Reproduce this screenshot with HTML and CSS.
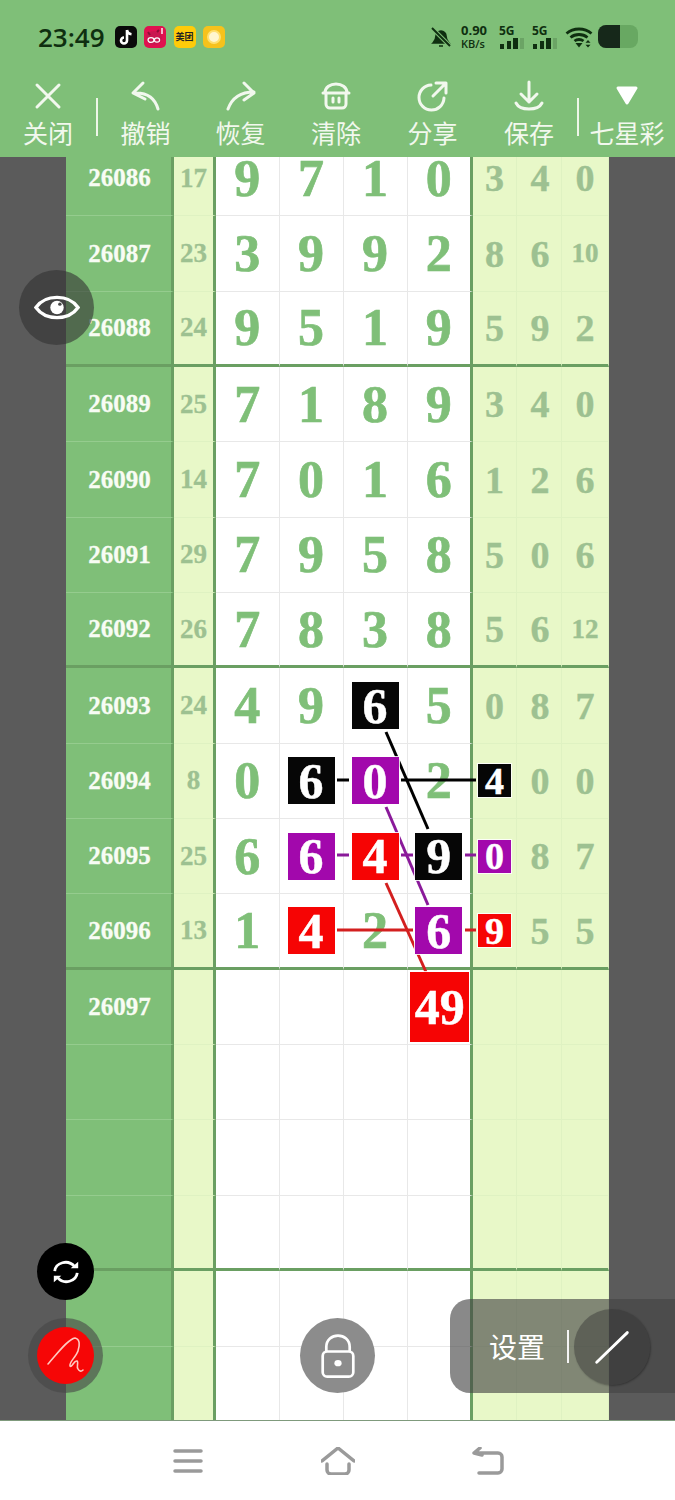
FILE: index.html
```html
<!DOCTYPE html>
<html lang="zh-CN">
<head>
    <meta charset="UTF-8">
    <meta name="viewport" content="width=device-width, initial-scale=1.0">
    <title>七星彩</title>
    <link rel="stylesheet" href="styles.css">
</head>
<body>
    <div class="page">
        <!-- status bar -->
        <div class="status">
            <span class="clock">23:49</span>
            <div class="apps">
                <span class="app app-tiktok">
                    <svg viewBox="0 0 22 22"><path d="M12 4v10.5a3 3 0 1 1-3-3M12 4c.4 2.6 2 4 4.5 4.3" fill="none" stroke="#fff" stroke-width="2.6"/></svg>
                </span>
                <span class="app app-pig">
                    <svg viewBox="0 0 22 22"><ellipse cx="10" cy="12" rx="8" ry="7" fill="#c9174f"/><path d="M4 6l2 3M13 6l2-2" stroke="#8e0f38" stroke-width="2"/><ellipse cx="7" cy="14" rx="3" ry="2.4" fill="none" stroke="#fff" stroke-width="1.2"/><ellipse cx="13" cy="14" rx="2.6" ry="2.2" fill="none" stroke="#fff" stroke-width="1.2"/><path d="M18 2v6" stroke="#fff" stroke-width="1.4"/></svg>
                </span>
                <span class="app app-meituan">美团</span>
                <span class="app app-sun"><i></i></span>
            </div>
            <div class="status-right">
                <svg class="bell" viewBox="0 0 22 22"><path d="M3 17c2-2 3-4 3-7a5 5 0 0 1 10 0c0 3 1 5 3 7zM9 20h4" fill="#0f2f10" stroke="#0f2f10" stroke-width="1.6"/><path d="M2 2l18 18" stroke="#7fbf78" stroke-width="4"/><path d="M2 2l18 18" stroke="#0f2f10" stroke-width="2"/></svg>
                <div class="speed"><span>0.90</span><span class="unit">KB/s</span></div>
                <div class="signal"><span>5G</span><svg viewBox="0 0 26 11"><path d="M1 6h4v5H1zM8 3h4v8H8zM14 0h5v11h-5z" fill="#0f2f10"/><path d="M21 0h4v11h-4z" fill="#0f2f10" opacity=".18"/></svg></div>
                <div class="signal"><span>5G</span><svg viewBox="0 0 26 11"><path d="M1 6h4v5H1zM8 3h4v8H8zM14 0h5v11h-5z" fill="#0f2f10"/><path d="M21 0h4v11h-4z" fill="#0f2f10" opacity=".18"/></svg></div>
                <svg class="wifi" viewBox="0 0 28 22"><path d="M1.5 7.5c7-6 18-6 25 0M5.5 11.5c4.800-4 12.200-4 17 0M9.500 15c2.500-2 6.500-2 9 0" fill="none" stroke="#0f2f10" stroke-width="2.8"/><path d="M10.5 17h7l-3.500 4.500z" fill="#0f2f10"/><path d="M23 14l2.500 2.800h-5zM23 21.500l2.500-2.800h-5z" fill="#0f2f10"/></svg>
                <div class="battery"><i></i></div>
            </div>
        </div>

        <!-- toolbar -->
        <div class="toolbar">
            <div class="tool">
                <svg viewBox="0 0 32 32"><path d="M5 5l22 22M27 5L5 27"/></svg>
                <span>关闭</span>
            </div>
            <i class="tool-sep"></i>
            <div class="tool tool-narrow">
                <svg viewBox="0 0 32 32"><path d="M13 3L3 13l12 6M3 13c14-1 22 5 25 16"/></svg>
                <span>撤销</span>
            </div>
            <div class="tool tool-narrow">
                <svg viewBox="0 0 32 32"><path d="M19 3l10 10-10 7M29 12C15 12 7 18 3 29"/></svg>
                <span>恢复</span>
            </div>
            <div class="tool">
                <svg viewBox="0 0 32 32"><path d="M5 13c0-12 22-12 22 0M3 13h26M6 13v11a4 4 0 0 0 4 4h12a4 4 0 0 0 4-4V13M13 18v4M19 18v4"/></svg>
                <span>清除</span>
            </div>
            <div class="tool tool-wide">
                <svg viewBox="0 0 32 32"><path d="M14 5a12.5 12.5 0 1 0 13 13M16 16L28 4M19 3h10v10"/></svg>
                <span>分享</span>
            </div>
            <div class="tool">
                <svg viewBox="0 0 32 32"><path d="M16 2v20M8 14l8 8 8-8M3 23c4 8 22 8 26 0"/></svg>
                <span>保存</span>
            </div>
            <i class="tool-sep"></i>
            <div class="tool">
                <svg viewBox="0 0 32 32"><path class="solid" d="M7 8h18L16 23z"/></svg>
                <span>七星彩</span>
            </div>
        </div>

        <!-- chart -->
        <div class="board">
            <div class="grid">
                <div class="row"><div>26086</div><div>17</div><div>9</div><div>7</div><div>1</div><div>0</div><div>3</div><div>4</div><div>0</div></div>
                <div class="row"><div>26087</div><div>23</div><div>3</div><div>9</div><div>9</div><div>2</div><div>8</div><div>6</div><div class="two">10</div></div>
                <div class="row row-end"><div>26088</div><div>24</div><div>9</div><div>5</div><div>1</div><div>9</div><div>5</div><div>9</div><div>2</div></div>
                <div class="row"><div>26089</div><div>25</div><div>7</div><div>1</div><div>8</div><div>9</div><div>3</div><div>4</div><div>0</div></div>
                <div class="row"><div>26090</div><div>14</div><div>7</div><div>0</div><div>1</div><div>6</div><div>1</div><div>2</div><div>6</div></div>
                <div class="row"><div>26091</div><div>29</div><div>7</div><div>9</div><div>5</div><div>8</div><div>5</div><div>0</div><div>6</div></div>
                <div class="row row-end"><div>26092</div><div>26</div><div>7</div><div>8</div><div>3</div><div>8</div><div>5</div><div>6</div><div class="two">12</div></div>
                <div class="row"><div>26093</div><div>24</div><div>4</div><div>9</div><div><b class="box black">6</b></div><div>5</div><div>0</div><div>8</div><div>7</div></div>
                <div class="row"><div>26094</div><div>8</div><div>0</div><div><b class="box black">6</b></div><div><b class="box purple">0</b></div><div>2</div><div><b class="box small black">4</b></div><div>0</div><div>0</div></div>
                <div class="row"><div>26095</div><div>25</div><div>6</div><div><b class="box purple">6</b></div><div><b class="box red">4</b></div><div><b class="box black">9</b></div><div><b class="box small purple">0</b></div><div>8</div><div>7</div></div>
                <div class="row row-end"><div>26096</div><div>13</div><div>1</div><div><b class="box red">4</b></div><div>2</div><div><b class="box purple">6</b></div><div><b class="box small red">9</b></div><div>5</div><div>5</div></div>
                <div class="row"><div>26097</div><div></div><div></div><div></div><div></div><div><b class="box big red">49</b></div><div></div><div></div><div></div></div>
                <div class="row"><div></div><div></div><div></div><div></div><div></div><div></div><div></div><div></div><div></div></div>
                <div class="row"><div></div><div></div><div></div><div></div><div></div><div></div><div></div><div></div><div></div></div>
                <div class="row row-end"><div></div><div></div><div></div><div></div><div></div><div></div><div></div><div></div><div></div></div>
                <div class="row"><div></div><div></div><div></div><div></div><div></div><div></div><div></div><div></div><div></div></div>
                <div class="row"><div></div><div></div><div></div><div></div><div></div><div></div><div></div><div></div><div></div></div>
            </div>
        </div>

        <!-- bottom nav -->
        <div class="nav">
            <svg viewBox="0 0 34 28"><path d="M4 4h26M4 14h26M4 24h26"/></svg>
            <svg viewBox="0 0 34 28"><path d="M1 14L17 1l16 13M6 17v6a4 4 0 0 0 4 4h14a4 4 0 0 0 4-4v-6"/></svg>
            <svg viewBox="0 0 34 28"><path d="M9 1L3 6l8 2M3 6h24a4 4 0 0 1 4 4v12a4 4 0 0 1-4 4H8"/></svg>
        </div>

        <!-- connecting lines between the picked numbers -->
        <svg class="links" viewBox="0 0 675 1500">
            <g stroke="#000">
                <path d="M386 732L428 829"/>
                <path d="M337 780h12M401 780h75"/>
            </g>
            <g stroke="#8a1a9a">
                <path d="M386 807L428 905"/>
                <path d="M337 855h12M401 855h12M465 855h11"/>
            </g>
            <g stroke="#d31f1f">
                <path d="M386 883L426 972"/>
                <path d="M337 930h76M465 930h11"/>
            </g>
        </svg>

        <!-- floating controls -->
        <div class="float eye">
            <svg viewBox="0 0 48 32"><path d="M2 16C12 2 36 2 46 16C36 30 12 30 2 16z" fill="none" stroke="#fff" stroke-width="3.5"/><circle cx="24" cy="16" r="7" fill="#fff"/><circle cx="27" cy="12.5" r="1.8" fill="#474747"/></svg>
        </div>
        <div class="float sync">
            <svg viewBox="0 0 32 32"><path d="M4 15C5 6 18 2 25 10M28 17c-1 9-14 13-21 5" fill="none" stroke="#fff" stroke-width="3"/><path d="M21 12h8V5zM11 20H3v7z" fill="#fff"/></svg>
        </div>
        <div class="float pen">
            <div class="pen-dot">
                <svg viewBox="0 0 57 57"><path d="M11 37C20 27 31 12 38 11c5 1 5 7 3 13-2 6-9 11-8 15 2 2 4-6 7-5 2 1-1 6 1 8 1 2 3 3 5 1" fill="none" stroke="#ffc9c0" stroke-width="1.6" stroke-linecap="round"/></svg>
            </div>
        </div>
        <div class="float lock">
            <svg viewBox="0 0 40 50"><rect x="3" y="20" width="34" height="28" rx="5" fill="none" stroke="#fff" stroke-width="3"/><path d="M7 20v-5c0-17 26-17 26 0v5" fill="none" stroke="#fff" stroke-width="3"/><ellipse cx="20" cy="33" rx="4" ry="3.5" fill="#fff"/></svg>
        </div>
        <div class="float panel">
            <span class="panel-label">设置</span>
            <i class="panel-sep"></i>
            <div class="panel-dot">
                <svg viewBox="0 0 40 40"><path d="M3 37L37 4" stroke="#fff" stroke-width="3.2" stroke-linecap="round"/></svg>
            </div>
        </div>
    </div>
</body>
</html>
```

FILE: styles.css
```css
* {
    box-sizing: border-box;
}

body {
    margin: 0;
    font-family: "Noto Sans CJK SC", "Noto Sans", sans-serif;
}

.page {
    position: relative;
    width: 675px;
    height: 1500px;
    overflow: hidden;
    display: flex;
    flex-direction: column;
    background-color: #7fbf78;
}

/* status bar */
.status {
    height: 75px;
    flex: none;
    display: flex;
    align-items: center;
    padding: 0 37px 2px 38px;
    color: #0f2f10;
}

.clock {
    font-family: "Open Sans", sans-serif;
    font-size: 26px;
    font-weight: 600;
    margin-right: 10px;
}

.apps {
    display: flex;
    gap: 7.5px;
}

.app {
    width: 22px;
    height: 22px;
    border-radius: 5px;
    display: flex;
    align-items: center;
    justify-content: center;
    overflow: hidden;
}

.app svg {
    width: 22px;
    height: 22px;
}

.app-tiktok {
    background-color: #0a0a0a;
}

.app-pig {
    background-color: #e0114f;
}

.app-meituan {
    background-color: #ffcb0a;
    color: #222;
    font-size: 9px;
    font-weight: 700;
    white-space: nowrap;
}

.app-sun {
    background-color: #f6c21c;
}

.app-sun i {
    width: 14px;
    height: 14px;
    border-radius: 50%;
    background-color: #fff6d0;
    border: 2px solid #ffe070;
}

.status-right {
    margin-left: auto;
    display: flex;
    align-items: center;
}

.bell {
    width: 22px;
    height: 22px;
}

.speed {
    margin-left: 9px;
    display: flex;
    flex-direction: column;
    font-family: "Open Sans", sans-serif;
    font-weight: 700;
    font-size: 13px;
    line-height: 13px;
    width: 38px;
}

.speed .unit {
    font-size: 11px;
    font-weight: 600;
}

.signal {
    width: 33px;
    height: 24px;
    display: flex;
    flex-direction: column;
    justify-content: space-between;
    font-family: "Open Sans", sans-serif;
    font-weight: 700;
    font-size: 12px;
    line-height: 11px;
}

.signal svg {
    width: 26px;
    height: 11px;
}

.wifi {
    width: 28px;
    height: 22px;
}

.battery {
    margin-left: 5px;
    width: 40px;
    height: 23px;
    border-radius: 8px;
    background-color: #68a862;
    overflow: hidden;
}

.battery i {
    display: block;
    width: 22px;
    height: 100%;
    background-color: #16281a;
}

/* toolbar */
.toolbar {
    height: 82px;
    flex: none;
    display: flex;
    align-items: flex-start;
    color: #f2f8ee;
    padding-top: 5px;
}

.tool {
    flex: 0 0 96px;
    display: flex;
    flex-direction: column;
    align-items: center;
}

.tool-narrow {
    flex-basis: 95px;
}

.tool-wide {
    flex-basis: 97px;
}

.tool svg {
    width: 32px;
    height: 32px;
    fill: none;
    stroke: #f2f8ee;
    stroke-width: 3;
    stroke-linecap: round;
    stroke-linejoin: round;
}

.tool svg .solid {
    fill: #fff;
    stroke: #fff;
    stroke-width: 3;
}

.tool span {
    font-size: 25px;
    line-height: 36px;
    white-space: nowrap;
    margin-top: 2px;
}

.tool-sep {
    flex: none;
    width: 2px;
    height: 38px;
    margin-top: 18px;
    background-color: #eef6e8;
}

/* chart */
.board {
    flex: 1;
    min-height: 0;
    overflow: hidden;
    background-color: #5b5b5b;
    padding-left: 66px;
}

.grid {
    margin-top: -16px;
    width: 543px;
}

.row {
    height: 75.35px;
    display: grid;
    grid-template-columns: 108px 42px 63.5px 64px 64px 65.5px 44px 45px 47px;
    font-family: "Liberation Serif", serif;
    font-weight: 700;
}

.row > div {
    display: flex;
    align-items: center;
    justify-content: center;
    border-bottom: 1px solid #e8e8e8;
    border-right: 1px solid #e8e8e8;
    background-color: #fff;
    color: #7fbf78;
    font-size: 52px;
    -webkit-text-stroke: 0.7px currentColor;
}

/* number column */
.row > div:nth-child(1) {
    background-color: #7fbf78;
    color: #f8fcf4;
    font-size: 25px;
    padding-left: 2px;
    border-bottom-color: #95cc8e;
    border-right: 3px solid #6a9f62;
    -webkit-text-stroke: 0.3px currentColor;
}

/* sum column */
.row > div:nth-child(2) {
    background-color: #e8f8c8;
    color: #9dc191;
    font-size: 27px;
    border-bottom-color: #dff2c2;
    border-right: 3px solid #6a9f62;
    -webkit-text-stroke: 0.3px currentColor;
}

.row > div:nth-child(6) {
    border-right: 3px solid #6a9f62;
}

/* tail columns */
.row > div:nth-child(n+7) {
    background-color: #e8f8c8;
    color: #9dc191;
    font-size: 38px;
    border-bottom-color: #dff2c2;
    border-right-color: #dff2c2;
    -webkit-text-stroke: 0.4px currentColor;
}

.row > div:nth-child(8) {
    padding-left: 2px;
}

.row > div.two {
    font-size: 27px;
}

.row-end > div,
.row-end > div:nth-child(n) {
    border-bottom: 3px solid #6a9f62;
}

.box {
    position: relative;
    z-index: 2;
    width: 47px;
    height: 47px;
    display: flex;
    align-items: center;
    justify-content: center;
    color: #fff;
    font-size: 50px;
    -webkit-text-stroke: 0.5px #fff;
    box-shadow: 0 0 0 1px rgba(255, 255, 255, 0.85);
}

.box.small {
    width: 33px;
    height: 33px;
    font-size: 38px;
}

.box.big {
    width: 59px;
    height: 70px;
    left: 1px;
    font-size: 50px;
}

.black {
    background-color: #060606;
}

.purple {
    background-color: #a208ac;
}

.red {
    background-color: #f60404;
}

.links {
    position: absolute;
    top: 0;
    left: 0;
    width: 675px;
    height: 1500px;
    z-index: 1;
    fill: none;
    stroke-width: 3;
    pointer-events: none;
}

/* bottom nav */
.nav {
    height: 80px;
    flex: none;
    background-color: #fff;
    border-top: 1px solid #7f9a7c;
    display: flex;
    align-items: center;
    justify-content: center;
    gap: 116px;
}

.nav svg {
    width: 34px;
    height: 28px;
    fill: none;
    stroke: #9a9a9a;
    stroke-width: 3.5;
    stroke-linecap: round;
    stroke-linejoin: round;
}

/* floating controls */
.float {
    position: absolute;
    z-index: 3;
    display: flex;
    align-items: center;
    justify-content: center;
}

.eye {
    left: 19px;
    top: 270px;
    width: 75px;
    height: 75px;
    border-radius: 50%;
    background-color: rgba(50, 50, 50, 0.6);
}

.eye svg {
    width: 46px;
    height: 31px;
}

.sync {
    left: 37px;
    top: 1243px;
    width: 57px;
    height: 57px;
    border-radius: 50%;
    background-color: #000;
}

.sync svg {
    width: 30px;
    height: 30px;
}

.pen {
    left: 28px;
    top: 1318px;
    width: 75px;
    height: 75px;
    border-radius: 50%;
    background-color: rgba(70, 70, 70, 0.6);
}

.pen-dot {
    width: 57px;
    height: 57px;
    border-radius: 50%;
    background-color: #f60606;
}

.pen-dot svg {
    display: block;
    width: 57px;
    height: 57px;
}

.lock {
    left: 300px;
    top: 1318px;
    width: 75px;
    height: 75px;
    border-radius: 50%;
    background-color: #8c8c8c;
}

.lock svg {
    width: 36px;
    height: 46px;
}

.panel {
    left: 450px;
    top: 1299px;
    width: 225px;
    height: 94px;
    border-radius: 20px 0 0 20px;
    background-color: rgba(68, 68, 68, 0.63);
    justify-content: flex-start;
    padding-left: 39px;
}

.panel-label {
    color: #fff;
    font-size: 28px;
    line-height: 36px;
}

.panel-sep {
    width: 2px;
    height: 33px;
    margin-left: 22px;
    background-color: #f4f4f4;
}

.panel-dot {
    position: absolute;
    left: 124px;
    top: 10px;
    width: 76px;
    height: 76px;
    border-radius: 50%;
    background-color: rgba(50, 50, 50, 0.45);
    box-shadow: 1px 1px 2px rgba(0, 0, 0, 0.3);
    display: flex;
    align-items: center;
    justify-content: center;
}

.panel-dot svg {
    width: 36px;
    height: 36px;
}
```
